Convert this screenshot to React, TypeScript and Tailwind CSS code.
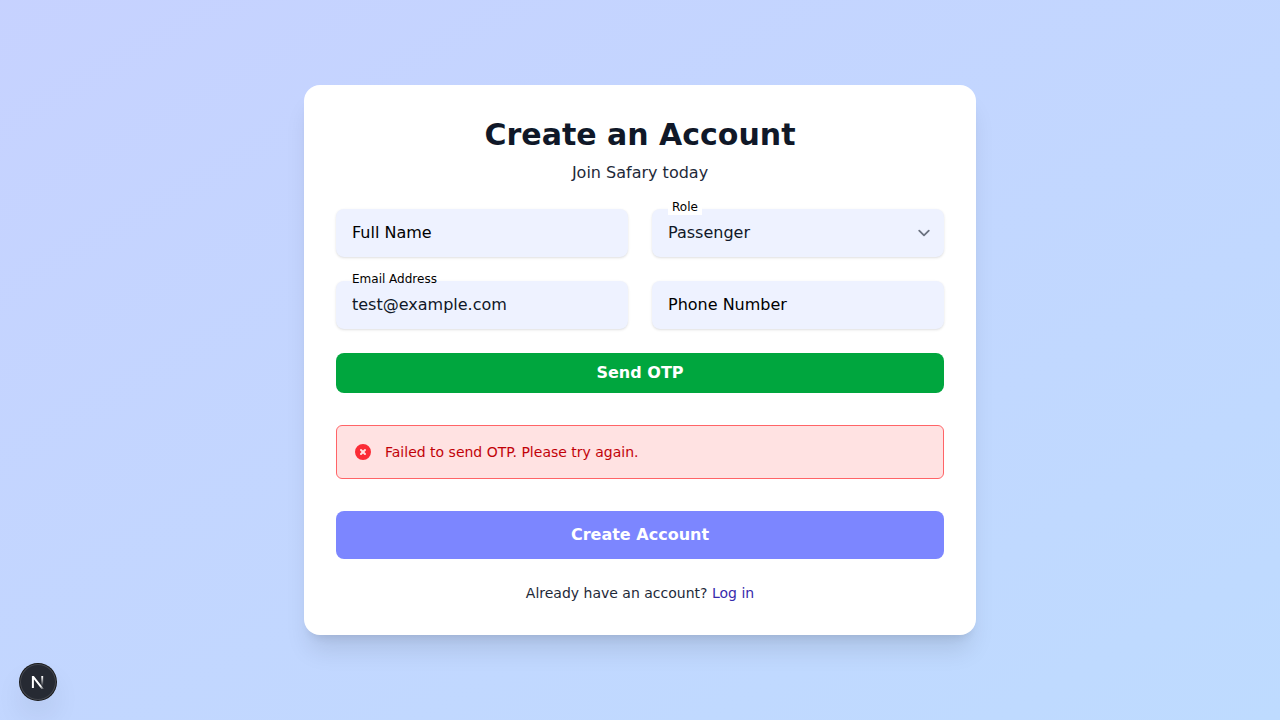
import { useState } from "react";
import type { InputHTMLAttributes } from "react";

const fieldBox =
  "block w-full appearance-none rounded-lg bg-indigo-50 px-4 py-3 text-base text-gray-900 shadow-sm outline-none focus:ring-2 focus:ring-indigo-500";

type TextFieldProps = InputHTMLAttributes<HTMLInputElement> & {
  id: string;
  label: string;
};

function TextField({ id, label, ...rest }: TextFieldProps) {
  return (
    <div className="relative">
      <input id={id} placeholder=" " className={`peer ${fieldBox}`} {...rest} />
      <label
        htmlFor={id}
        className="pointer-events-none absolute -top-2.5 left-4 text-xs text-black peer-placeholder-shown:top-3 peer-placeholder-shown:text-base"
      >
        {label}
      </label>
    </div>
  );
}

function RoleField() {
  const [role, setRole] = useState("Passenger");
  return (
    <div className="relative">
      <select
        id="role"
        value={role}
        onChange={(e) => setRole(e.target.value)}
        className={fieldBox}
      >
        <option>Passenger</option>
        <option>Driver</option>
      </select>
      <label
        htmlFor="role"
        className="absolute -top-2.5 left-4 bg-white px-1 text-xs text-black"
      >
        Role
      </label>
      <svg
        className="pointer-events-none absolute top-3 right-2 size-6"
        viewBox="0 0 20 20"
        fill="none"
        aria-hidden="true"
      >
        <path
          stroke="#6b7280"
          strokeLinecap="round"
          strokeLinejoin="round"
          strokeWidth="1.5"
          d="M6 8l4 4 4-4"
        />
      </svg>
    </div>
  );
}

function ErrorAlert({ message }: { message: string }) {
  return (
    <div
      role="alert"
      className="mt-8 flex items-center gap-3 rounded-md border border-red-400 bg-red-100 p-4"
    >
      <svg className="size-5 shrink-0 text-[#fb2c36]" viewBox="0 0 20 20" fill="currentColor" aria-hidden="true">
        <path
          fillRule="evenodd"
          clipRule="evenodd"
          d="M10 18a8 8 0 100-16 8 8 0 000 16zM8.707 7.293a1 1 0 00-1.414 1.414L8.586 10l-1.293 1.293a1 1 0 101.414 1.414L10 11.414l1.293 1.293a1 1 0 001.414-1.414L11.414 10l1.293-1.293a1 1 0 00-1.414-1.414L10 8.586 8.707 7.293z"
        />
      </svg>
      <p className="text-sm text-red-700">{message}</p>
    </div>
  );
}

function DevToolsButton() {
  return (
    <button
      type="button"
      aria-label="Open Next.js Dev Tools"
      className="fixed bottom-5 left-5 size-9 rounded-full bg-[#262a33] shadow-[0_0_0_1px_#171717,inset_0_0_0_1px_rgba(255,255,255,0.14),0_16px_32px_-8px_rgba(0,0,0,0.24)]"
    >
      <svg className="size-9" viewBox="0 0 36 36" fill="none" aria-hidden="true">
        <defs>
          <linearGradient id="diagonal" gradientUnits="userSpaceOnUse" x1="9.96" y1="11.14" x2="15.16" y2="17.58">
            <stop stopColor="white" />
            <stop offset="0.6" stopColor="white" stopOpacity="0" />
            <stop offset="1" stopColor="white" stopOpacity="0" />
          </linearGradient>
          <linearGradient id="stem" gradientUnits="userSpaceOnUse" x1="11.82" y1="1.4" x2="11.79" y2="11">
            <stop stopColor="white" />
            <stop offset="1" stopColor="white" stopOpacity="0" />
          </linearGradient>
          <clipPath id="mark">
            <rect x="0" y="1" width="16" height="13" />
          </clipPath>
        </defs>
        <g transform="translate(10.4 11)" clipPath="url(#mark)">
          <path d="M13.3 15.2L2.5 1.4V13" stroke="url(#diagonal)" strokeWidth="2" />
          <path d="M11.825 1V13" stroke="url(#stem)" strokeWidth="1.86" />
        </g>
      </svg>
    </button>
  );
}

export default function App() {
  const [name, setName] = useState("");
  const [email, setEmail] = useState("test@example.com");
  const [phone, setPhone] = useState("");

  return (
    <div className="flex min-h-screen items-center justify-center bg-linear-to-br from-indigo-200 to-blue-200 font-['DejaVu_Sans',sans-serif]">
      <main className="w-full max-w-2xl rounded-2xl bg-white p-8 shadow-xl">
        <h1 className="text-center text-3xl font-bold text-gray-900">Create an Account</h1>
        <p className="mt-2 text-center text-gray-800">Join Safary today</p>

        <form className="mt-6" onSubmit={(e) => e.preventDefault()}>
          <div className="grid grid-cols-1 gap-6 sm:grid-cols-2">
            <TextField id="name" label="Full Name" value={name} onChange={(e) => setName(e.target.value)} />
            <RoleField />
            <TextField
              id="email"
              type="email"
              label="Email Address"
              value={email}
              onChange={(e) => setEmail(e.target.value)}
            />
            <TextField
              id="phone"
              type="tel"
              label="Phone Number"
              value={phone}
              onChange={(e) => setPhone(e.target.value)}
            />
          </div>

          <button type="button" className="mt-6 w-full rounded-lg bg-green-600 py-2 font-semibold text-white">
            Send OTP
          </button>

          <ErrorAlert message="Failed to send OTP. Please try again." />

          <button type="submit" disabled className="mt-8 w-full rounded-lg bg-indigo-400 py-3 font-semibold text-white">
            Create Account
          </button>
        </form>

        <p className="mt-6 text-center text-sm text-gray-800">
          Already have an account?{" "}
          <a href="#login" className="text-indigo-800">
            Log in
          </a>
        </p>
      </main>
      <DevToolsButton />
    </div>
  );
}
